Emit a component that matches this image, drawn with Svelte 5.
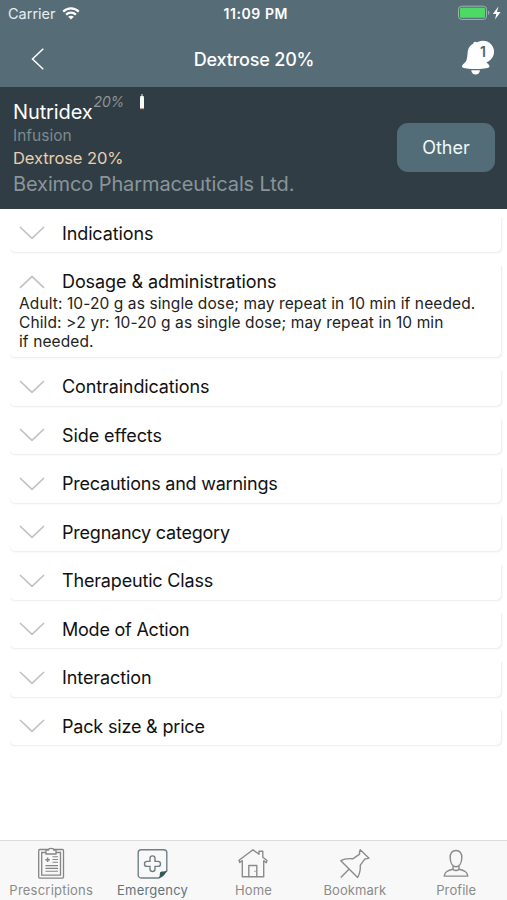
<script>
  const sections = [
    { title: 'Indications', ls: -0.12 },
    {
      title: 'Dosage & administrations',
      ls: -0.08,
      body: [
        'Adult: 10-20 g as single dose; may repeat in 10 min if needed.',
        'Child: >2 yr: 10-20 g as single dose; may repeat in 10 min',
        'if needed.'
      ]
    },
    { title: 'Contraindications', ls: -0.12 },
    { title: 'Side effects', ls: -0.1 },
    { title: 'Precautions and warnings', ls: -0.22 },
    { title: 'Pregnancy category', ls: -0.22 },
    { title: 'Therapeutic Class', ls: -0.17 },
    { title: 'Mode of Action', ls: -0.22 },
    { title: 'Interaction', ls: -0.1 },
    { title: 'Pack size & price', ls: -0.18 }
  ];
</script>

<div class="screen">
  <div class="status">
    <div class="side">
      <span class="carrier">Carrier</span>
      <svg class="wifi" width="18" height="13" viewBox="0 0 18 13" fill="none" stroke="#fff" stroke-width="2.2">
        <path d="M1.2 4.6C5.6.3 12.4.3 16.8 4.6" />
        <path d="M4.1 7.6C6.9 4.9 11.1 4.9 13.9 7.6" />
        <path d="M9 12.6 6.2 9.8C7.8 8.4 10.2 8.4 11.8 9.8Z" fill="#fff" stroke="none" />
      </svg>
    </div>
    <span class="time">11:09 PM</span>
    <div class="side end">
      <svg width="44" height="16" viewBox="0 0 44 16">
        <rect x="0.5" y="1.2" width="28" height="13.2" rx="3.2" fill="none" stroke="#a3b0b6" />
        <rect x="2" y="2.8" width="25" height="10" rx="1.2" fill="#4cd964" />
        <path d="M30.1 5.8c1.8.7 1.8 3.5 0 4.2z" fill="#a3b0b6" />
        <path d="M40.4 1.6 34.8 8.9h3.5l-1.3 5.6 5.6-7.500h-3.6z" fill="#fff" />
      </svg>
    </div>
  </div>

  <div class="nav">
    <svg class="back" width="14" height="22" viewBox="0 0 14 22" fill="none" stroke="#fff" stroke-width="1.5">
      <path d="M12.3 .8 1.5 11 12.3 21.2" />
    </svg>
    <span class="title">Dextrose 20%</span>
    <div class="bell">
      <svg width="34" height="36" viewBox="0 0 34 36" fill="#fff">
        <path d="M12.6 3.6C9 5 7 8.6 6.6 13c-.4 5-.6 8.4-3.6 10.4C1.6 24.4.9 25.6 1 26.9c3 2.700 24 2.700 27.400 0 .3-1.900-1.600-3.200-2.700-4.400L20 4z" />
        <circle cx="22" cy="11.800" r="11" />
        <circle cx="14.300" cy="3.800" r="2.100" />
        <path d="M10.200 30.200h8.800c-.3 2.700-2 4.300-4.400 4.300s-4.100-1.600-4.400-4.300z" />
      </svg>
      <span class="count">1</span>
    </div>
  </div>

  <div class="drug">
    <div class="info">
      <div class="name">
        <span class="brand">Nutridex</span><span class="strength">20%</span>
        <svg class="bottle" width="6" height="18" viewBox="0 0 6 18">
          <path d="M1.400 3h3.200l.4 2V16H1V5z" fill="#f4fbf2" />
          <path d="M2 1h2v2H2z" fill="#8f9a94" />
          <path d="M1 15.300h4V16.300H1z" fill="#b4665a" />
        </svg>
      </div>
      <div class="form">Infusion</div>
      <div class="generic">Dextrose 20%</div>
      <div class="maker">Beximco Pharmaceuticals Ltd.</div>
    </div>
    <div class="other">Other</div>
  </div>

  <div class="list">
    {#each sections as s}
      <div class="card" class:open={s.body}>
        <div class="row">
          <svg width="26" height="14" viewBox="0 0 26 14" fill="none" stroke="#c2c2c2" stroke-width="1.700">
            {#if s.body}
              <path d="M1 12.800 13 1.500 25 12.800" />
            {:else}
              <path d="M1 1 13 12.300 25 1" />
            {/if}
          </svg>
          <span style="letter-spacing: {s.ls}px">{s.title}</span>
        </div>
        {#if s.body}
          <div class="body">
            {#each s.body as line}<div>{line}</div>{/each}
          </div>
        {/if}
      </div>
    {/each}
  </div>

  <div class="tabs">
    <div class="tab">
      <svg width="32" height="32" viewBox="0 0 32 32" fill="none" stroke="#858585" stroke-width="1.300">
        <rect x="3.700" y="2.500" width="24.800" height="28.600" rx="1" />
        <path d="M11 5.500H6.700v22.600h18.800V5.500H21" />
        <path d="M11 7V3.100h2.500c.3-2.200 5-2.200 5.300 0H21V7z" fill="#f8f8f8" />
        <path d="M10.300 12.800h4.600M12.600 10.500v4.600" stroke-width="1.500" />
        <path d="M17.500 9.800h5.500M17.500 12.500h5.500M17.500 15.200h5.500M10.500 18.600h12.500M10.500 21.400h12.500M10.500 24.200h12.500" stroke-width="1.100" />
      </svg>
      <span class="wide">Prescriptions</span>
    </div>
    <div class="tab active">
      <svg width="32" height="32" viewBox="0 0 32 32" fill="none" stroke="#6f8085" stroke-width="1.400">
        <path d="M22.800 31H5.200a3 3 0 0 1-3-3V5.700a3 3 0 0 1 3-3h22.600a3 3 0 0 1 3 3V24z" />
        <path d="M22.800 31.200c1.500-2 .6-4.200 1.400-6 1.600-1.400 4.600-.2 6.600-1.700-1 3.500-4.500 7.200-8 7.700z" fill="#2f5a5a" stroke="none" />
        <path d="M14 14.400v-3a2.500 2.500 0 0 1 5 0v3h3a2.500 2.500 0 0 1 0 5h-3v2.600a2.500 2.500 0 0 1-5 0v-2.600h-3a2.500 2.500 0 0 1 0-5z" />
      </svg>
      <span class="wide">Emergency</span>
    </div>
    <div class="tab">
      <svg width="32" height="32" viewBox="0 0 32 32" fill="none" stroke="#8b8b8b" stroke-width="1.400" stroke-linejoin="round">
        <path d="M5.300 13.500 2.800 15.500 2 13.300 16 2.800l6 4.500V4.300h3.800v5.900l4.200 3.300-.8 2.200-2.500-2" />
        <path d="M5.300 13.200v16.500h6.500V18.500h8v11.200h6.900V13.200" />
        <path d="M11.800 29.700h8M18 23.800v1" />
      </svg>
      <span>Home</span>
    </div>
    <div class="tab">
      <svg width="32" height="32" viewBox="0 0 32 32" fill="none" stroke="#8b8b8b" stroke-width="1.400" stroke-linejoin="round">
        <path d="M21.200 2.700 30 11.200c-1.700.7-2.900.7-4 .6l-4.700 6.300c.2 4.400-.3 8.200-2.700 12.400L1.800 13.700c4-2.400 8-2.400 12-1.900l6.800-4.700c-.4-1.600-.1-3 .6-4.400z" />
        <path d="M10.200 22 1.800 30.400" />
      </svg>
      <span>Bookmark</span>
    </div>
    <div class="tab">
      <svg width="32" height="32" viewBox="0 0 32 32" fill="none" stroke="#8b8b8b" stroke-width="1.400" stroke-linejoin="round">
        <path d="M10.200 11.200C9.700 6.300 12.300 3.500 16 3.500s6.300 2.800 5.800 7.700c-.3 4.800-2.500 8.500-5.800 8.500s-5.500-3.700-5.800-8.500z" />
        <path d="M13 18.800v3.400c-4.500 1.300-8.300 2-8.800 6.900h23.600c-.5-4.900-4.300-5.600-8.800-6.900v-3.400M13 22.200c1.500 1.700 4.500 1.700 6 0" />
      </svg>
      <span>Profile</span>
    </div>
  </div>
</div>

<style>
  :global(body) {
    margin: 0;
    background: #fff;
  }
  .screen {
    width: 507px;
    height: 900px;
    display: flex;
    flex-direction: column;
    overflow: hidden;
    background: #fff;
    font-family: Inter, Roboto, sans-serif;
    white-space: nowrap;
  }
  .status {
    height: 28px;
    padding-bottom: 2px;
    box-sizing: border-box;
    background: #566d78;
    color: #fff;
    display: flex;
    align-items: center;
  }
  .side {
    flex: 1;
    display: flex;
    align-items: center;
    padding-left: 8px;
  }
  .side.end {
    justify-content: flex-end;
    padding: 0 5px 0 0;
  }
  .carrier {
    font-size: 14.500px;
    color: #e8eef0;
  }
  .wifi {
    margin-left: 6px;
  }
  .time {
    font-size: 14px;
    font-weight: 600;
    letter-spacing: 0.55px;
    margin-left: 1.500px;
  }
  .nav {
    height: 58.500px;
    padding-top: 4px;
    box-sizing: border-box;
    background: #566d78;
    color: #fff;
    display: flex;
    align-items: center;
    justify-content: space-between;
  }
  .back {
    margin-left: 31px;
    width: 14px;
  }
  .title {
    font-size: 18px;
    font-weight: 500;
    letter-spacing: -0.18px;
    margin-left: 2px;
  }
  .bell {
    width: 34px;
    height: 36px;
    margin: 0 12px 2px 0;
    position: relative;
  }
  .count {
    position: absolute;
    left: 19px;
    top: 3px;
    font-size: 14px;
    font-weight: 600;
    color: #4a6470;
  }
  .drug {
    height: 122px;
    background: #303d45;
    display: flex;
    justify-content: space-between;
    align-items: center;
  }
  .info {
    padding-left: 13px;
    align-self: flex-start;
    padding-top: 5px;
  }
  .name {
    display: flex;
    height: 33px;
  }
  .brand {
    color: #fff;
    font-size: 20px;
    line-height: 40px;
    letter-spacing: -0.12px;
  }
  .strength {
    color: #8d9599;
    font-size: 14px;
    font-style: italic;
    line-height: 20px;
    margin-left: 1px;
    letter-spacing: -0.2px;
  }
  .bottle {
    margin: 1px 0 0 14.500px;
  }
  .form {
    color: #7f898d;
    font-size: 15.500px;
    line-height: 22px;
  }
  .generic {
    color: #e9cfb0;
    font-size: 16.500px;
    line-height: 23px;
    letter-spacing: -0.08px;
  }
  .maker {
    color: #89959a;
    font-size: 20px;
    line-height: 28px;
    letter-spacing: -0.11px;
  }
  .other {
    width: 98px;
    height: 49px;
    margin-right: 12px;
    border-radius: 11px;
    background: #526d78;
    color: #f2f8fa;
    font-size: 18px;
    line-height: 49px;
    text-align: center;
  }
  .list {
    flex: 1;
    padding: 5px 6px 0 10px;
    display: flex;
    flex-direction: column;
    gap: 10px;
  }
  .card {
    height: 38.500px;
    border-radius: 5px;
    background: #fff;
    box-shadow: 0.500px 0.500px 2px #ebebeb;
    clip-path: inset(4px -3px -3px 0);
  }
  .card.open {
    height: 95px;
  }
  .row {
    height: 39.500px;
    display: flex;
    align-items: center;
    padding-left: 9px;
    font-size: 18px;
    color: #111;
  }
  .row span {
    margin-left: 17px;
  }
  .body {
    margin-top: -7.500px;
    padding-left: 9px;
    font-size: 15.500px;
    line-height: 19px;
    letter-spacing: 0.1px;
    color: #222;
  }
  .tabs {
    height: 59.500px;
    border-top: 1px solid #dcdcdc;
    background: #f8f8f8;
    display: flex;
  }
  .tab {
    width: 101.400px;
    display: flex;
    flex-direction: column;
    align-items: center;
    padding-top: 6px;
    box-sizing: border-box;
    color: #8b8b8b;
    font-size: 13px;
  }
  .tab span {
    line-height: 16px;
    margin-top: 3px;
    letter-spacing: 0.08px;
  }
  .tab .wide {
    letter-spacing: 0.22px;
    margin-left: 1px;
  }
  .active {
    color: #5f747c;
  }
</style>
